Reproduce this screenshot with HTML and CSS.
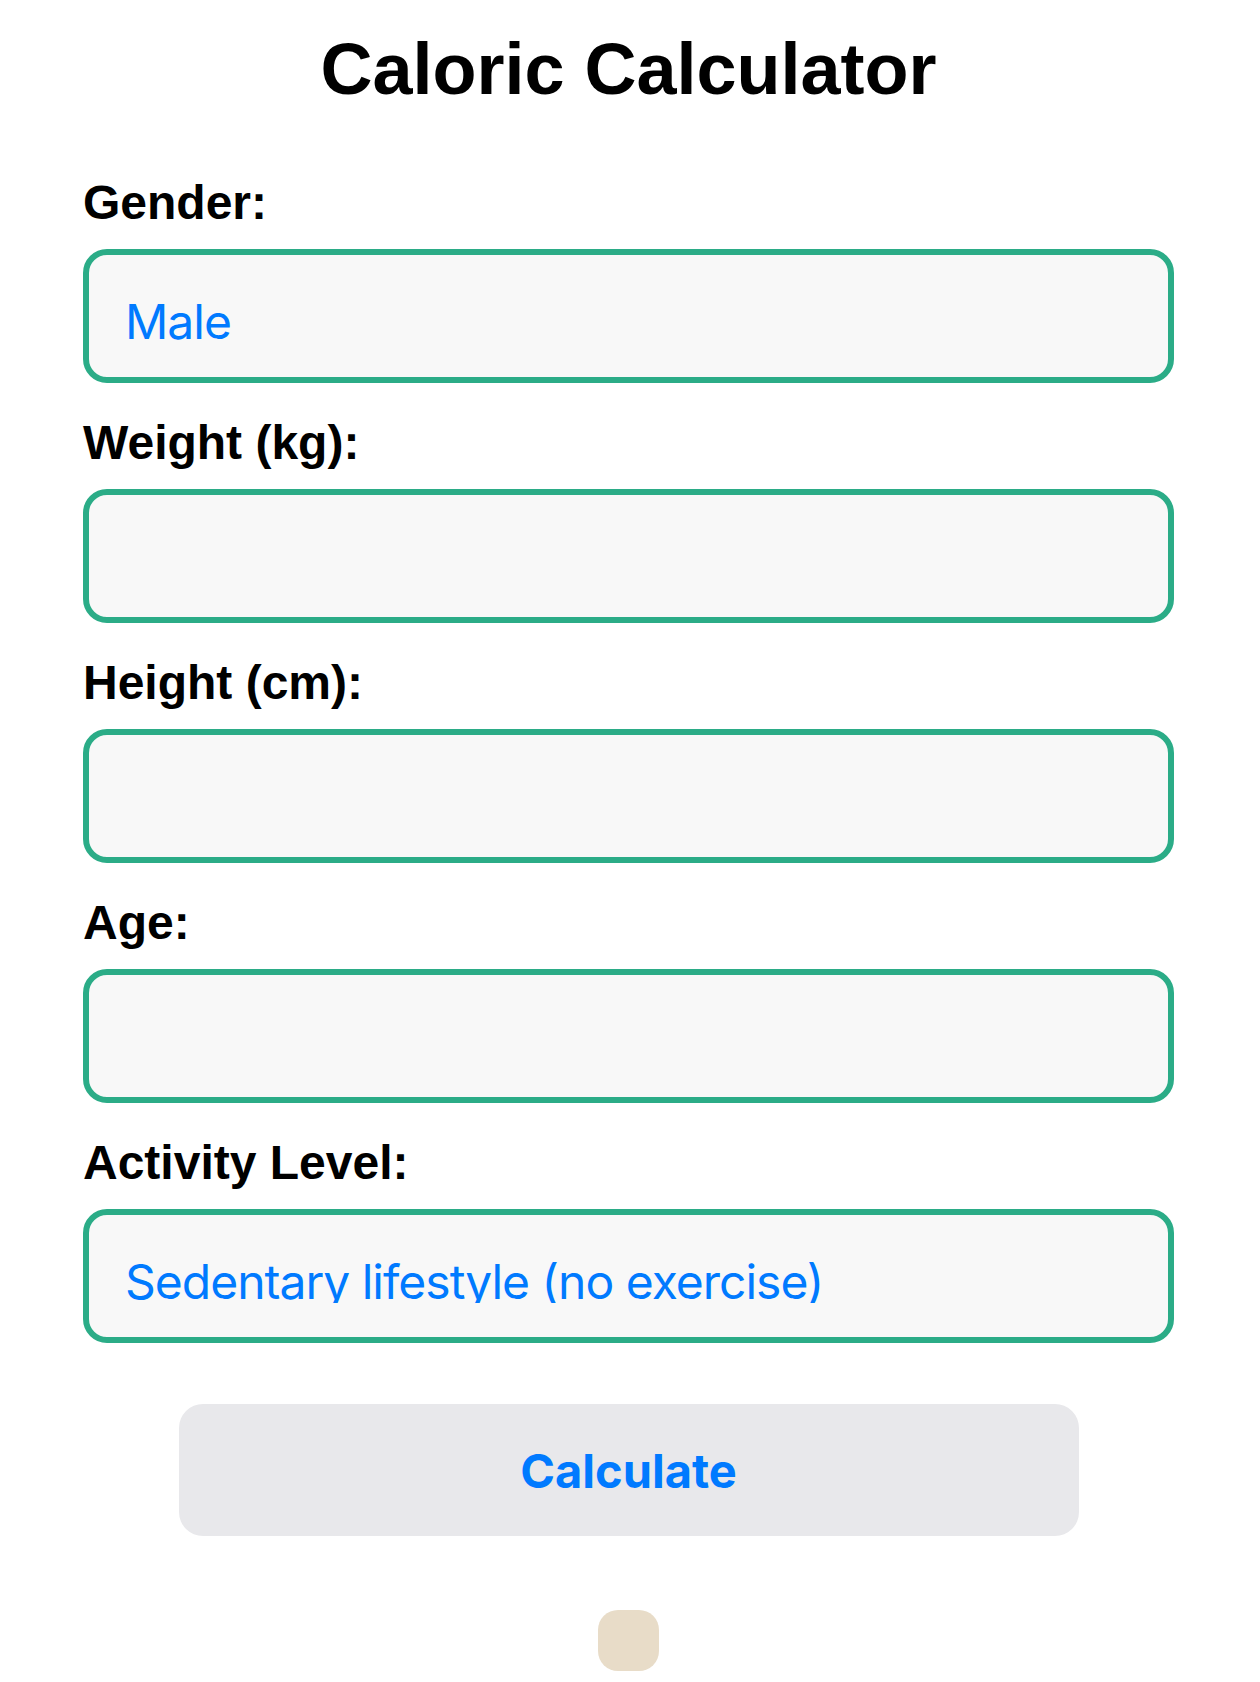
FILE: index.html
```html
<!DOCTYPE html>
<html lang="en">
<head>
<meta charset="utf-8">
<title>Caloric Calculator</title>
<link rel="stylesheet" href="styles.css">
</head>
<body>
<main class="page">
  <h1 class="title">Caloric Calculator</h1>
  <form class="form">
    <div class="group">
      <label class="label">Gender:</label>
      <div class="field picker"><div class="value">Male</div></div>
    </div>
    <div class="group">
      <label class="label" for="w">Weight (kg):</label>
      <input class="field" id="w" type="text">
    </div>
    <div class="group">
      <label class="label" for="h">Height (cm):</label>
      <input class="field" id="h" type="text">
    </div>
    <div class="group">
      <label class="label" for="a">Age:</label>
      <input class="field" id="a" type="text">
    </div>
    <div class="group">
      <label class="label">Activity Level:</label>
      <div class="field picker"><div class="value">Sedentary lifestyle (no exercise)</div></div>
    </div>
    <button class="calc" type="button">Calculate</button>
  </form>
  <div class="result"></div>
</main>
</body>
</html>
```

FILE: styles.css
```css
html, body {
  margin: 0;
  padding: 0;
  background: #ffffff;
}

.page {
  width: 1091px;
  margin: 0 0 0 83px;
  padding-top: 28px;
  display: flex;
  flex-direction: column;
  align-items: center;
  font-family: "Liberation Sans", Arial, sans-serif;
  color: #000;
}

.title {
  margin: 0;
  font-size: 72px;
  line-height: 82px;
  font-weight: 700;
  text-align: center;
}

.form {
  width: 100%;
  margin-top: 66px;
  display: flex;
  flex-direction: column;
  align-items: center;
  gap: 33px;
}

.group {
  width: 100%;
  display: flex;
  flex-direction: column;
  gap: 19px;
}

.label {
  font-size: 48px;
  line-height: 54px;
  font-weight: 700;
}

.field {
  display: block;
  width: 100%;
  height: 134px;
  box-sizing: border-box;
  margin: 0;
  border: 6px solid #2bac87;
  border-radius: 24px;
  background: #f8f8f8;
  padding: 38px 36px 0;
  font-family: Inter, "Noto Sans", sans-serif;
  font-size: 48px;
  letter-spacing: -1px;
  color: #007aff;
  outline: none;
  appearance: none;
}

.value {
  height: 50px;
  line-height: 58px;
  overflow: hidden;
  white-space: nowrap;
}

.calc {
  margin-top: 28px;
  width: 900px;
  height: 132px;
  border: none;
  border-radius: 24px;
  background: #e8e8eb;
  color: #007aff;
  font-family: Inter, "Noto Sans", sans-serif;
  font-size: 47px;
  font-weight: 700;
  cursor: pointer;
}

.result {
  margin-top: 74px;
  width: 61px;
  height: 61px;
  border-radius: 20px;
  background: #e8dcc8;
}
```
